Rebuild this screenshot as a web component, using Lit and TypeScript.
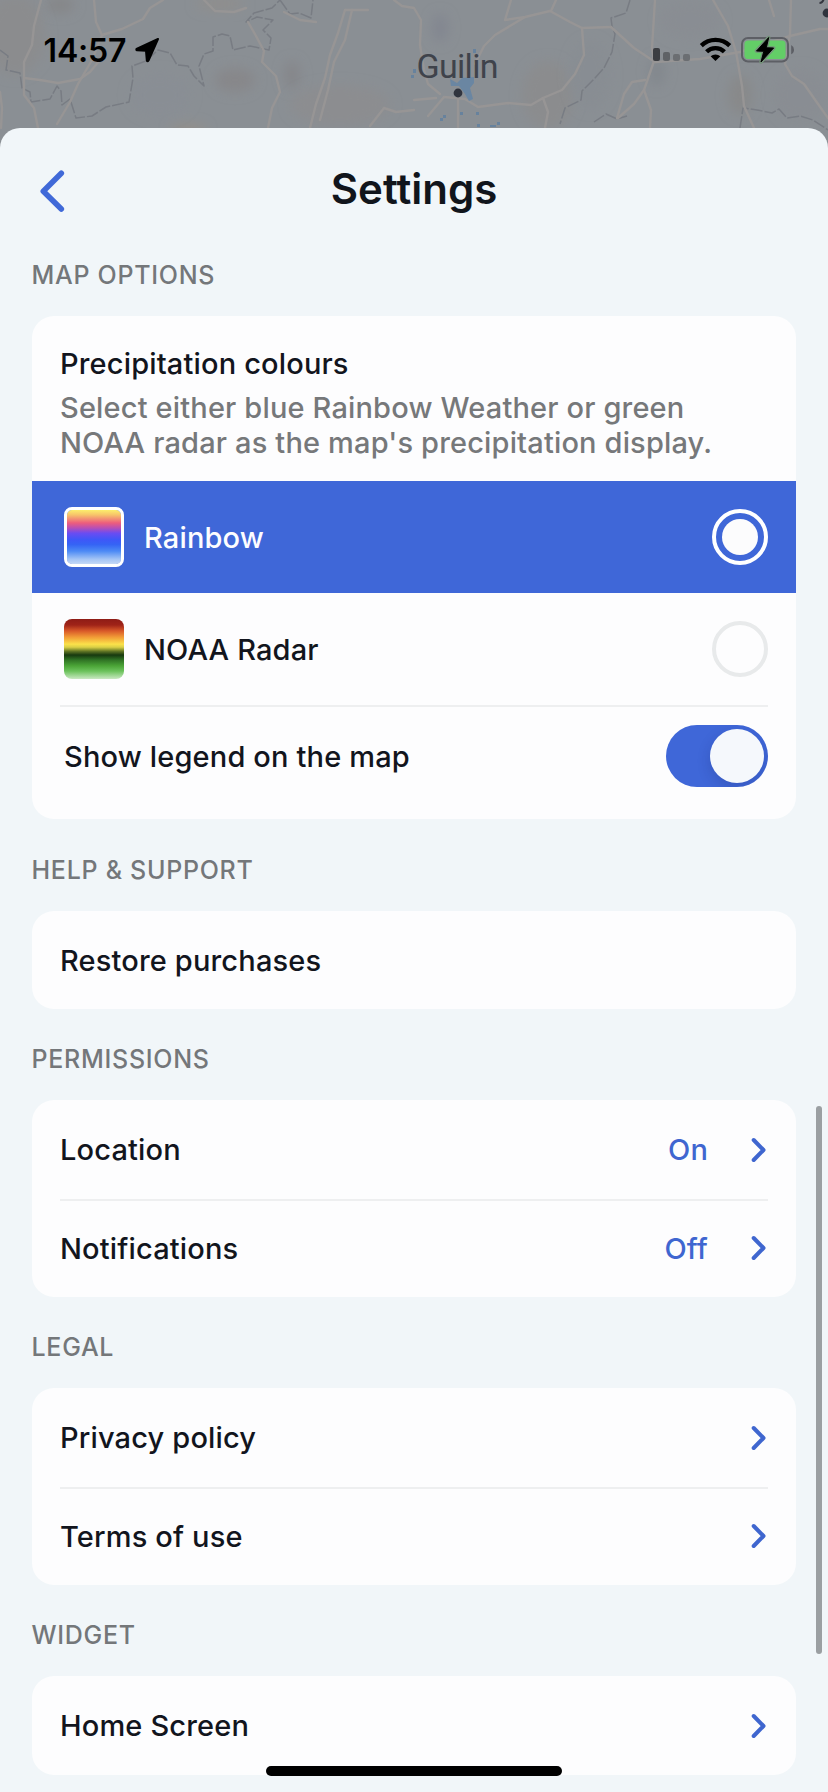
import { LitElement, html, css, svg, nothing } from "lit";
import { customElement, property } from "lit/decorators.js";
import { classMap } from "lit/directives/class-map.js";

interface RowData {
  label: string;
  value?: string;
  chevron?: boolean;
}

interface SectionData {
  title: string;
  rows: RowData[];
}

const SECTIONS: SectionData[] = [
  { title: "HELP & SUPPORT", rows: [{ label: "Restore purchases" }] },
  {
    title: "PERMISSIONS",
    rows: [
      { label: "Location", value: "On", chevron: true },
      { label: "Notifications", value: "Off", chevron: true },
    ],
  },
  {
    title: "LEGAL",
    rows: [
      { label: "Privacy policy", chevron: true },
      { label: "Terms of use", chevron: true },
    ],
  },
  { title: "WIDGET", rows: [{ label: "Home Screen", chevron: true }] },
];

const ROADS = [
  "M41 0 L34 26 L32 45 L24 62 L24 78 L40 80 L58 83 L80 79 L90 72 L100 60",
  "M24 78 L24 95 L34 108 L38 128",
  "M94 0 L96 22 L102 35 L122 29 L143 19 L150 8 L163 0",
  "M102 35 L92 60 L78 84 L70 102 L57 124",
  "M0 92 L2 108 L1 128",
  "M204 0 L215 11 L234 12 L246 8",
  "M248 22 L256 36 L264 51 L262 62 L276 76 L280 92 L272 108 L268 128",
  "M345 10 L338 33 L330 55 L325 78 L316 104 L310 128",
  "M352 10 L345 40 L334 62 L328 90 L320 120",
  "M345 10 L368 10",
  "M284 12 L300 20 L316 22",
  "M370 126 L384 108 L396 112 L414 110",
  "M394 0 L402 6 L414 8 L421 20 L420 45 L424 70 L428 84 L440 94",
  "M511 0 L505 20 L525 17 L550 11 L570 22 L582 28 L611 27",
  "M525 17 L495 35 L484 46 L475 64",
  "M556 0 L551 11",
  "M582 28 L584 55 L575 74 L562 90 L543 98 L531 105 L508 103 L478 107 L465 99 L444 97",
  "M458 98 L458 128 M414 100 L436 98 M444 97 L428 116",
  "M543 98 L548 112 L545 128",
  "M655 0 L652 48 L654 61 L644 90 L634 104 L618 118",
  "M611 27 L634 48 L655 62 L700 59 L740 52 L790 36 L820 29 L828 29",
  "M645 80 L632 82 L624 94 L617 118",
  "M644 90 L651 110 L650 128",
  "M713 0 L728 26 L736 52 L742 86 L744 106 L754 128",
  "M791 0 L790 34 L785 64 L792 76 L804 84 L818 104 L828 118",
  "M769 0 L774 16",
];

const BORDERS = [
  "M0 50 L8 56 L6 70 L20 73 L22 88 L30 92 L31 102 L50 99 L57 86 L61 91 L62 105 L70 99 L76 118 L92 116 L106 107 L129 102 L133 78 L132 66 L146 61 L158 50 L170 53 L177 65 L188 66 L194 76 L204 86 L199 66 L204 54 L213 51 L213 37 L222 34 L230 36 L233 50 L250 46 L269 50 L271 38 L263 30 L273 20 L257 17 L246 22 L254 13 L272 8 L280 0",
  "M280 0 L290 14 L299 13 L311 18 L313 0",
  "M630 0 L626 13 L611 18 L612 26 L615 34 L612 52 L604 68 L595 78 L582 91 L581 100 L565 108 L560 124",
  "M594 122 L606 114 L617 119 L627 116",
  "M740 128 L743 108 L757 110 L772 113 L779 109 L787 118 L800 116 L813 120 L828 130",
];

const PATCHES = [
  [60, 5, 14, 8, "#858688"],
  [15, 35, 30, 40, "#8b8c8e"],
  [220, 4, 24, 6, "#908e8c"],
  [235, 80, 20, 12, "#87878a"],
  [292, 75, 8, 14, "#85868a"],
  [188, 130, 18, 6, "#938f89"],
  [160, 95, 30, 22, "#898e94"],
  [440, 28, 8, 14, "#828690"],
  [548, 95, 26, 34, "#8b8c8e"],
  [590, 75, 20, 34, "#888d93"],
  [657, 72, 8, 14, "#82878d"],
  [740, 95, 12, 20, "#88898a"],
  [690, 20, 30, 18, "#898d93"],
  [340, 105, 50, 20, "#8c8d90"],
  [800, 95, 26, 26, "#898d93"],
] as const;

@customElement("map-backdrop")
class MapBackdrop extends LitElement {
  static styles = css`
    :host { display: block; width: 828px; height: 160px; background: #8a8f94; }
    svg { display: block; }
    .city { font: 400 34px Roboto, sans-serif; letter-spacing: -0.7px; }
  `;
  render() {
    return html`<svg width="828" height="160" viewBox="0 0 828 160" fill="none">
      <defs><filter id="soft" x="-100%" y="-100%" width="300%" height="300%"><feGaussianBlur stdDeviation="6" /></filter></defs>
      ${PATCHES.map(([x, y, rx, ry, c]) => svg`<ellipse cx=${x} cy=${y} rx=${rx} ry=${ry} fill=${c} filter="url(#soft)"/>`)}
      ${BORDERS.map((d) => svg`<path d=${d} stroke="#787c83" stroke-width="1.5" stroke-dasharray="12 2" stroke-linejoin="round"/>`)}
      ${ROADS.map((d) => svg`<path d=${d} stroke="#979595" stroke-width="2.4" stroke-linejoin="round" stroke-linecap="round"/>`)}
      <path d="M450 79 L457 83 L462 78 L474 77 L474 83 L470 88 L473 99 L469 101 L465 94 L459 86 L451 86Z" fill="#6a86a2" />
      <g fill="#67829d">
        <rect x="473" y="49" width="3" height="4" /><rect x="460" y="112" width="3" height="3" />
        <rect x="440" y="118" width="3" height="3" /><rect x="443" y="115" width="3" height="3" />
        <rect x="476" y="112" width="3" height="3" /><rect x="477" y="124" width="3" height="3" />
        <rect x="490" y="125" width="6" height="2" /><rect x="497" y="122" width="3" height="3" />
        <rect x="411" y="75" width="3" height="3" /><rect x="413" y="69" width="3" height="4" />
      </g>
      <circle cx="458" cy="93" r="4.4" fill="#30343e" />
      <circle cx="827" cy="13" r="4.4" fill="#30343e" />
      <path d="M819.500 3c2.500 0 3.500-1.500 4.300-4" stroke="#34373f" stroke-width="2" />
      <text class="city" x="416.500" y="78" fill="#3f434b">Guilin</text>
    </svg>`;
  }
}

@customElement("status-bar")
class StatusBar extends LitElement {
  static styles = css`
    :host { display: flex; justify-content: space-between; align-items: flex-start; padding: 30px 34px 0 43.5px; box-sizing: border-box; width: 828px; height: 128px; color: #000; }
    .left { display: flex; align-items: center; gap: 8px; height: 40px; }
    .time { padding-top: 1px; font: 600 32px/40px Inter, sans-serif; letter-spacing: -0.15px; }
    .right { display: block; }
    svg { display: block; }
  `;
  render() {
    return html`
      <div class="left">
        <span class="time">14:57</span>
        <svg width="26" height="26" viewBox="0 0 26 26"><path d="M24 2 L2.500 12 Q2 13.200 3 13.300 L12 13.800 L12.800 23.500 Q13.500 25 14.500 23.500Z" fill="#000" stroke="#000" stroke-width="2" stroke-linejoin="round" /></svg>
      </div>
      <svg class="right" width="142" height="40" viewBox="652 30 142 40">
        <rect x="653" y="48" width="7" height="13" rx="2" fill="#3b3d41" />
        <rect x="663" y="52" width="7" height="9" rx="2" fill="#5f6266" />
        <rect x="673" y="54" width="7" height="7" rx="2" fill="#6b6e72" />
        <rect x="683" y="54" width="7" height="7" rx="2" fill="#6b6e72" />
        <g fill="none" stroke="#000" stroke-width="4.300">
          <path d="M701.300 45.600 A20.500 20.500 0 0 1 729.700 45.600" />
          <path d="M706.600 51.800 A12.500 12.500 0 0 1 724.400 51.800" />
        </g>
        <path d="M715.500 61 L710.600 56.300 A7.200 7.200 0 0 1 720.400 56.300Z" fill="#000" />
        <rect x="742" y="38" width="46" height="23.500" rx="6" fill="none" stroke="#5d5f65" stroke-width="2" />
        <rect x="744.500" y="40.500" width="41" height="18.500" rx="3.500" fill="#63ce67" />
        <path d="M791.200 45 Q794 46.500 794 49.700 Q794 53 791.200 54.200Z" fill="#5d5f65" />
        <path d="M768.700 37.500 L756.500 51 L763.800 51.300 L761 62 L773.600 48 L766.300 47.800Z" fill="#000" stroke="#74917a" stroke-width="3.500" stroke-linejoin="round" />
        <path d="M768.700 37.500 L756.500 51 L763.800 51.300 L761 62 L773.600 48 L766.300 47.800Z" fill="#000" stroke="#000" stroke-width="1" stroke-linejoin="round" />
      </svg>`;
  }
}

@customElement("settings-row")
class SettingsRow extends LitElement {
  @property() label = "";
  @property() value = "";
  @property({ type: Boolean }) chevron = false;
  static styles = css`
    :host { display: flex; align-items: center; color: #12151d; }
    .label { flex: 1; }
    .value { color: #3f66d0; margin-right: 43px; }
    svg { display: block; }
  `;
  render() {
    return html`
      <span class="label">${this.label}</span>
      ${this.value ? html`<span class="value">${this.value}</span>` : nothing}
      ${this.chevron
        ? html`<svg width="17" height="26" viewBox="0 0 17 26"><path d="M2.700 3 L12.500 13 L2.700 23" fill="none" stroke="#3f66cf" stroke-width="4" stroke-linecap="round" stroke-linejoin="round" /></svg>`
        : nothing}`;
  }
}

@customElement("colour-option")
class ColourOption extends LitElement {
  @property() label = "";
  @property() palette = "";
  @property({ type: Boolean }) selected = false;
  static styles = css`
    .option { display: flex; align-items: center; box-sizing: border-box; height: 112px; padding: 0 28px 0 32px; color: #12151d; }
    .on { background: #3f67d8; color: #fdfdff; }
    .swatch { box-sizing: border-box; width: 60px; height: 60px; border-radius: 8px; margin-right: 20px; }
    .rainbow { border: 3px solid #fff; background: linear-gradient(#fcee6c 0%, #f7c46a 9%, #ed5d7d 24%, #b94fb4 33%, #6a4cf2 43%, #3e57f8 55%, #3564f5 64%, #4c8af5 76%, #a3c4f5 91%, #c5d9f6 100%) padding-box; }
    .noaa { background: linear-gradient(#8e1c16 0%, #9f2318 10%, #d95a29 20%, #f19a36 30%, #fbe14a 42%, #d9cf45 47%, #5f7424 54%, #17390f 60%, #2f7224 68%, #4ba437 78%, #6cc25c 87%, #b4e0ab 97%, #c9e8c2 100%); }
    .name { flex: 1; }
    .radio { box-sizing: border-box; display: grid; place-items: center; width: 56px; height: 56px; border: 4px solid #e8eaeb; border-radius: 50%; }
    .on .radio { border-color: #fff; }
    .dot { width: 36px; height: 36px; border-radius: 50%; background: #fcfcfd; }
  `;
  render() {
    return html`<div class=${classMap({ option: true, on: this.selected })}>
      <div class=${classMap({ swatch: true, [this.palette]: true })}></div>
      <span class="name">${this.label}</span>
      <div class="radio">${this.selected ? html`<div class="dot"></div>` : nothing}</div>
    </div>`;
  }
}

@customElement("app-root")
class AppRoot extends LitElement {
  static styles = css`
    :host { display: block; position: relative; width: 828px; height: 1792px; overflow: hidden; background: #8b8f94; font: 500 29px/35px Inter, sans-serif; letter-spacing: 0.16px; }
    .map { position: absolute; top: 0; left: 0; }
    .status { position: relative; }
    .sheet { position: relative; box-sizing: border-box; height: 1664px; padding: 0 32px; border-radius: 20px 20px 0 0; background: #f1f6f9; }
    .header { display: grid; grid-template-columns: 60px 1fr 60px; align-items: center; height: 97px; }
    .back { display: block; margin: 29px 0 0 6px; }
    .title { margin: 24px 0 0; text-align: center; font: 600 42px/50px Inter, sans-serif; letter-spacing: 0; color: #11151c; }
    .heading { box-sizing: border-box; height: 91px; margin: 0 0 0 -0.5px; padding-top: 35px; font: 540 25px/31px Inter, sans-serif; letter-spacing: 0.72px; color: #74777a; }
    .card { border-radius: 22px; background: #fdfdfe; overflow: hidden; }
    .options { margin-bottom: 1px; }
    .intro { padding: 30px 28px 21px; }
    .name { margin: 0 0 9px; font: inherit; color: #12151d; }
    .description { margin: 0; color: #76787a; white-space: nowrap; }
    .line { height: 2px; margin: 0 28px; background: #eeeff0; }
    .legend { display: flex; justify-content: space-between; align-items: center; padding: 18px 28px 32px 32px; color: #12151d; }
    .toggle { display: flex; justify-content: flex-end; box-sizing: border-box; width: 102px; height: 62px; padding: 4px; border-radius: 31px; background: #3f67d8; overflow: hidden; }
    .knob { width: 54px; height: 54px; border-radius: 50%; background: #f5f8fc; box-shadow: 0 5px 14px rgba(20, 30, 90, 0.2); }
    .row { box-sizing: border-box; height: 98px; padding: 0 28px; }
    .tall { height: 99px; }
    .last { height: 96px; padding-bottom: 2px; }
    .scrollbar { position: absolute; top: 1106px; left: 816px; width: 6px; height: 548px; border-radius: 3px; background: #9b9fa2; }
    .home { position: absolute; top: 1766px; left: 266px; width: 296px; height: 10px; border-radius: 5px; background: #000; }
  `;

  private section(s: SectionData) {
    return html`
      <h2 class="heading">${s.title}</h2>
      <div class="card">
        ${s.rows.map(
          (r, i) => html`
            ${i ? html`<div class="line"></div>` : nothing}
            <settings-row
              class=${classMap({ row: true, tall: i === 0 && !!r.chevron, last: i > 0 })}
              .label=${r.label}
              .value=${r.value ?? ""}
              .chevron=${!!r.chevron}
            ></settings-row>`
        )}
      </div>`;
  }

  render() {
    return html`
      <map-backdrop class="map"></map-backdrop>
      <status-bar class="status"></status-bar>
      <main class="sheet">
        <header class="header">
          <svg class="back" width="30" height="46" viewBox="38 168.500 30 46"><path d="M61.300 173.800 L43.300 191.700 L61.300 209.600" fill="none" stroke="#4069d8" stroke-width="5.600" stroke-linecap="round" stroke-linejoin="round" /></svg>
          <h1 class="title">Settings</h1>
        </header>
        <h2 class="heading">MAP OPTIONS</h2>
        <div class="card options">
          <div class="intro">
            <h3 class="name">Precipitation colours</h3>
            <p class="description">Select either blue Rainbow Weather or green<br />NOAA radar as the map's precipitation display.</p>
          </div>
          <colour-option label="Rainbow" palette="rainbow" selected></colour-option>
          <colour-option label="NOAA Radar" palette="noaa"></colour-option>
          <div class="line"></div>
          <div class="legend"><span>Show legend on the map</span><div class="toggle"><div class="knob"></div></div></div>
        </div>
        ${SECTIONS.map((s) => this.section(s))}
      </main>
      <div class="scrollbar"></div>
      <div class="home"></div>`;
  }
}
